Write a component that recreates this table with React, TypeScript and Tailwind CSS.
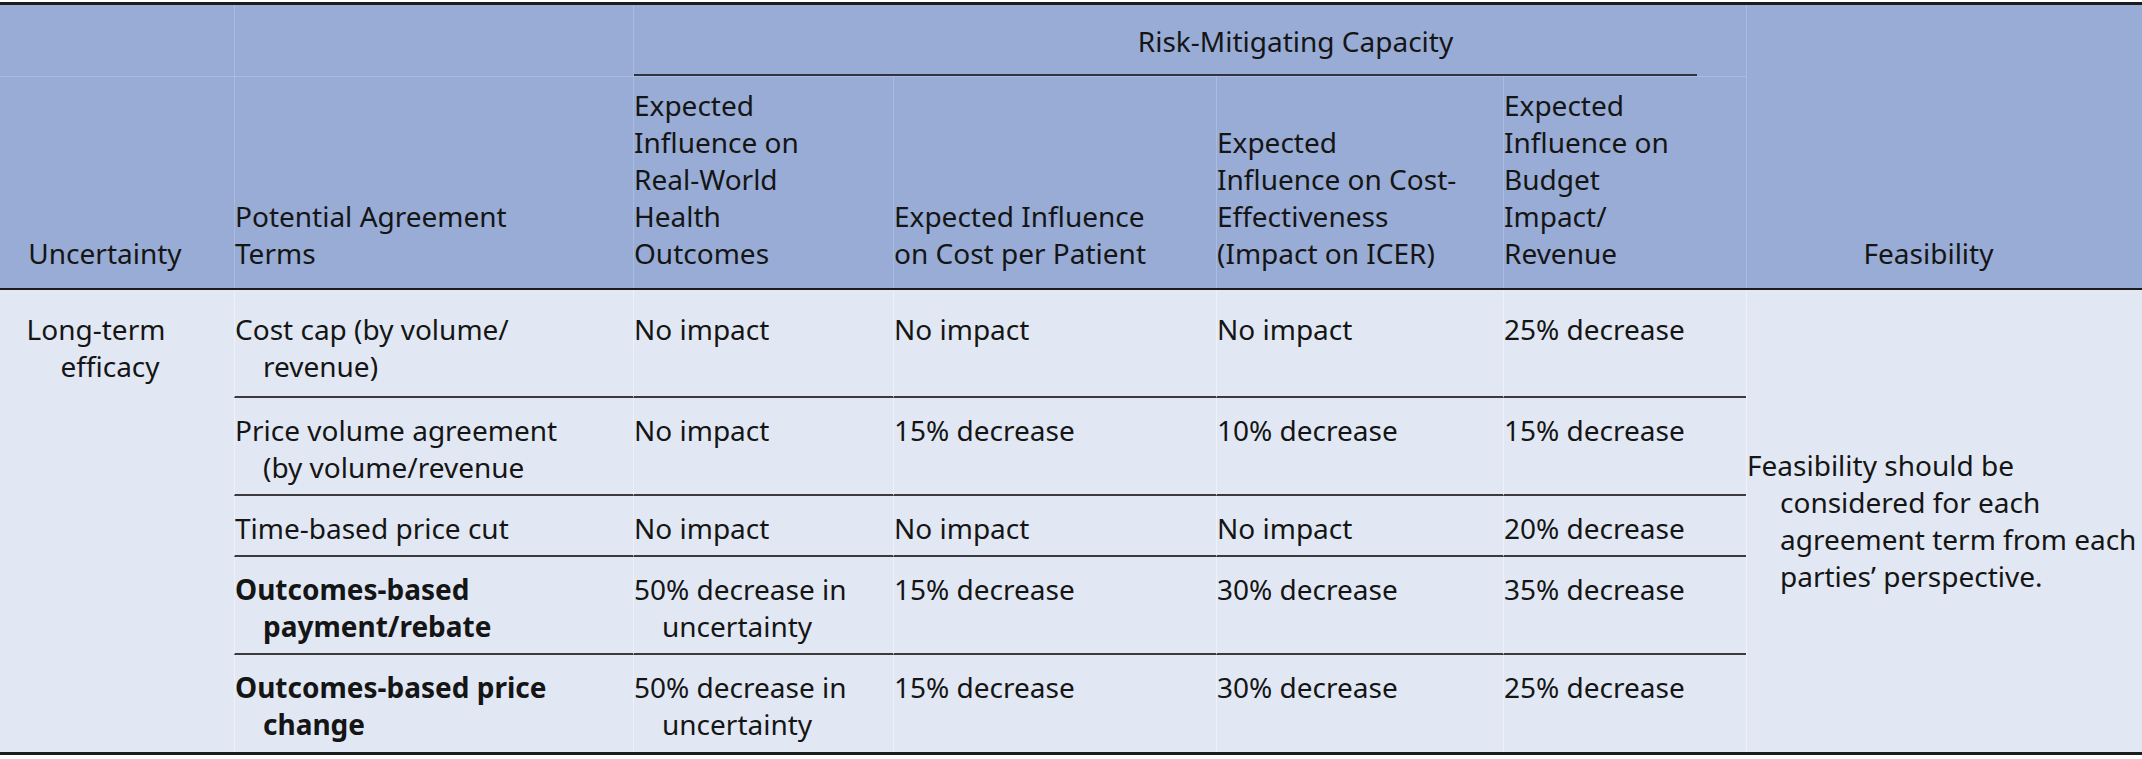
import React from 'react';

// column grid shared by header and body
const grid = 'grid grid-cols-[234px_399px_260px_323px_287px_243px_1fr]';

type Row = { term: string[]; bold?: boolean; cells: string[][] };

const rows: Row[] = [
  {
    term: ['Cost cap (by volume/', 'revenue)'],
    cells: [['No impact'], ['No impact'], ['No impact'], ['25% decrease']],
  },
  {
    term: ['Price volume agreement', '(by volume/revenue'],
    cells: [['No impact'], ['15% decrease'], ['10% decrease'], ['15% decrease']],
  },
  {
    term: ['Time-based price cut'],
    cells: [['No impact'], ['No impact'], ['No impact'], ['20% decrease']],
  },
  {
    term: ['Outcomes-based', 'payment/rebate'],
    bold: true,
    cells: [['50% decrease in', 'uncertainty'], ['15% decrease'], ['30% decrease'], ['35% decrease']],
  },
  {
    term: ['Outcomes-based price', 'change'],
    bold: true,
    cells: [['50% decrease in', 'uncertainty'], ['15% decrease'], ['30% decrease'], ['25% decrease']],
  },
];

function Lines({ lines }: { lines: string[] }) {
  return (
    <>
      {lines.map((l, i) => (
        <React.Fragment key={i}>
          {i > 0 && <br />}
          {l}
        </React.Fragment>
      ))}
    </>
  );
}

function HeadCell({ lines, className = '' }: { lines: string[]; className?: string }) {
  return (
    <div className={`flex flex-col justify-end whitespace-nowrap pt-[10px] pb-[16px] ${className}`}>
      <div>
        <Lines lines={lines} />
      </div>
    </div>
  );
}

export default function App() {
  return (
    <div className="w-[2142px] bg-white pt-[2px] font-['Noto_Sans',sans-serif] text-[28px] leading-[37px] text-[#151515]">
      {/* Header */}
      <div className="border-t-[3px] border-b-2 border-[#1c1c1c] bg-[#98acd6]">
        <div className={grid}>
          <div className="border-b border-[#a9bbe0]" />
          <div className="border-b border-l border-[#a9bbe0]" />
          <div className="col-span-4 border-b border-l border-[#a9bbe0]">
            <div className="mr-[49px] border-b-2 border-[#2f3441] pt-[18px] pb-[14px] pl-[260px] text-center">
              Risk-Mitigating Capacity
            </div>
          </div>
          <HeadCell
            lines={['Feasibility']}
            className="col-start-7 row-span-2 row-start-1 border-l border-[#a9bbe0] pr-[32px] text-center"
          />

          <HeadCell lines={['Uncertainty']} className="pr-[24px] text-center" />
          <HeadCell lines={['Potential Agreement', 'Terms']} className="border-l border-[#a9bbe0]" />
          <HeadCell
            lines={['Expected', 'Influence on', 'Real-World', 'Health', 'Outcomes']}
            className="border-l border-[#a9bbe0]"
          />
          <HeadCell lines={['Expected Influence', 'on Cost per Patient']} className="border-l border-[#a9bbe0]" />
          <HeadCell
            lines={['Expected', 'Influence on Cost-', 'Effectiveness', '(Impact on ICER)']}
            className="border-l border-[#a9bbe0]"
          />
          <HeadCell
            lines={['Expected', 'Influence on', 'Budget', 'Impact/', 'Revenue']}
            className="border-l border-[#a9bbe0]"
          />
        </div>
      </div>

      {/* Body */}
      <div className="border-b-[3px] border-[#1c1c1c] bg-[#e1e8f4]">
        <div className={grid}>
          <div className="col-start-1 row-span-5 row-start-1 whitespace-nowrap pt-[21px] pr-[42px] pl-[28px] indent-[-28px] text-center">
            <Lines lines={['Long-term', 'efficacy']} />
          </div>

          {rows.map((r, ri) => {
            const last = ri === rows.length - 1;
            const pad = ri === 0 ? 'pt-[21px] pb-[11px]' : last ? 'pt-[14px] pb-[9px]' : 'pt-[14px] pb-[8px]';
            const line = last ? '' : 'border-b-2 border-b-[#3b3b3b]';
            return (
              <React.Fragment key={ri}>
                <div
                  className={`whitespace-nowrap border-l border-l-[#edf1f9] pl-[28px] indent-[-28px] ${pad} ${line} ${
                    r.bold ? 'font-bold' : ''
                  }`}
                >
                  <Lines lines={r.term} />
                </div>
                {r.cells.map((c, ci) => (
                  <div
                    key={ci}
                    className={`whitespace-nowrap border-l border-l-[#edf1f9] pl-[28px] indent-[-28px] ${pad} ${line}`}
                  >
                    <Lines lines={c} />
                  </div>
                ))}
              </React.Fragment>
            );
          })}

          <div className="col-start-7 row-span-5 row-start-1 flex items-center border-l border-l-[#edf1f9]">
            <div className="whitespace-nowrap pl-[33px] indent-[-33px]">
              <Lines
                lines={['Feasibility should be', 'considered for each', 'agreement term from each', 'parties’ perspective.']}
              />
            </div>
          </div>
        </div>
      </div>
    </div>
  );
}
